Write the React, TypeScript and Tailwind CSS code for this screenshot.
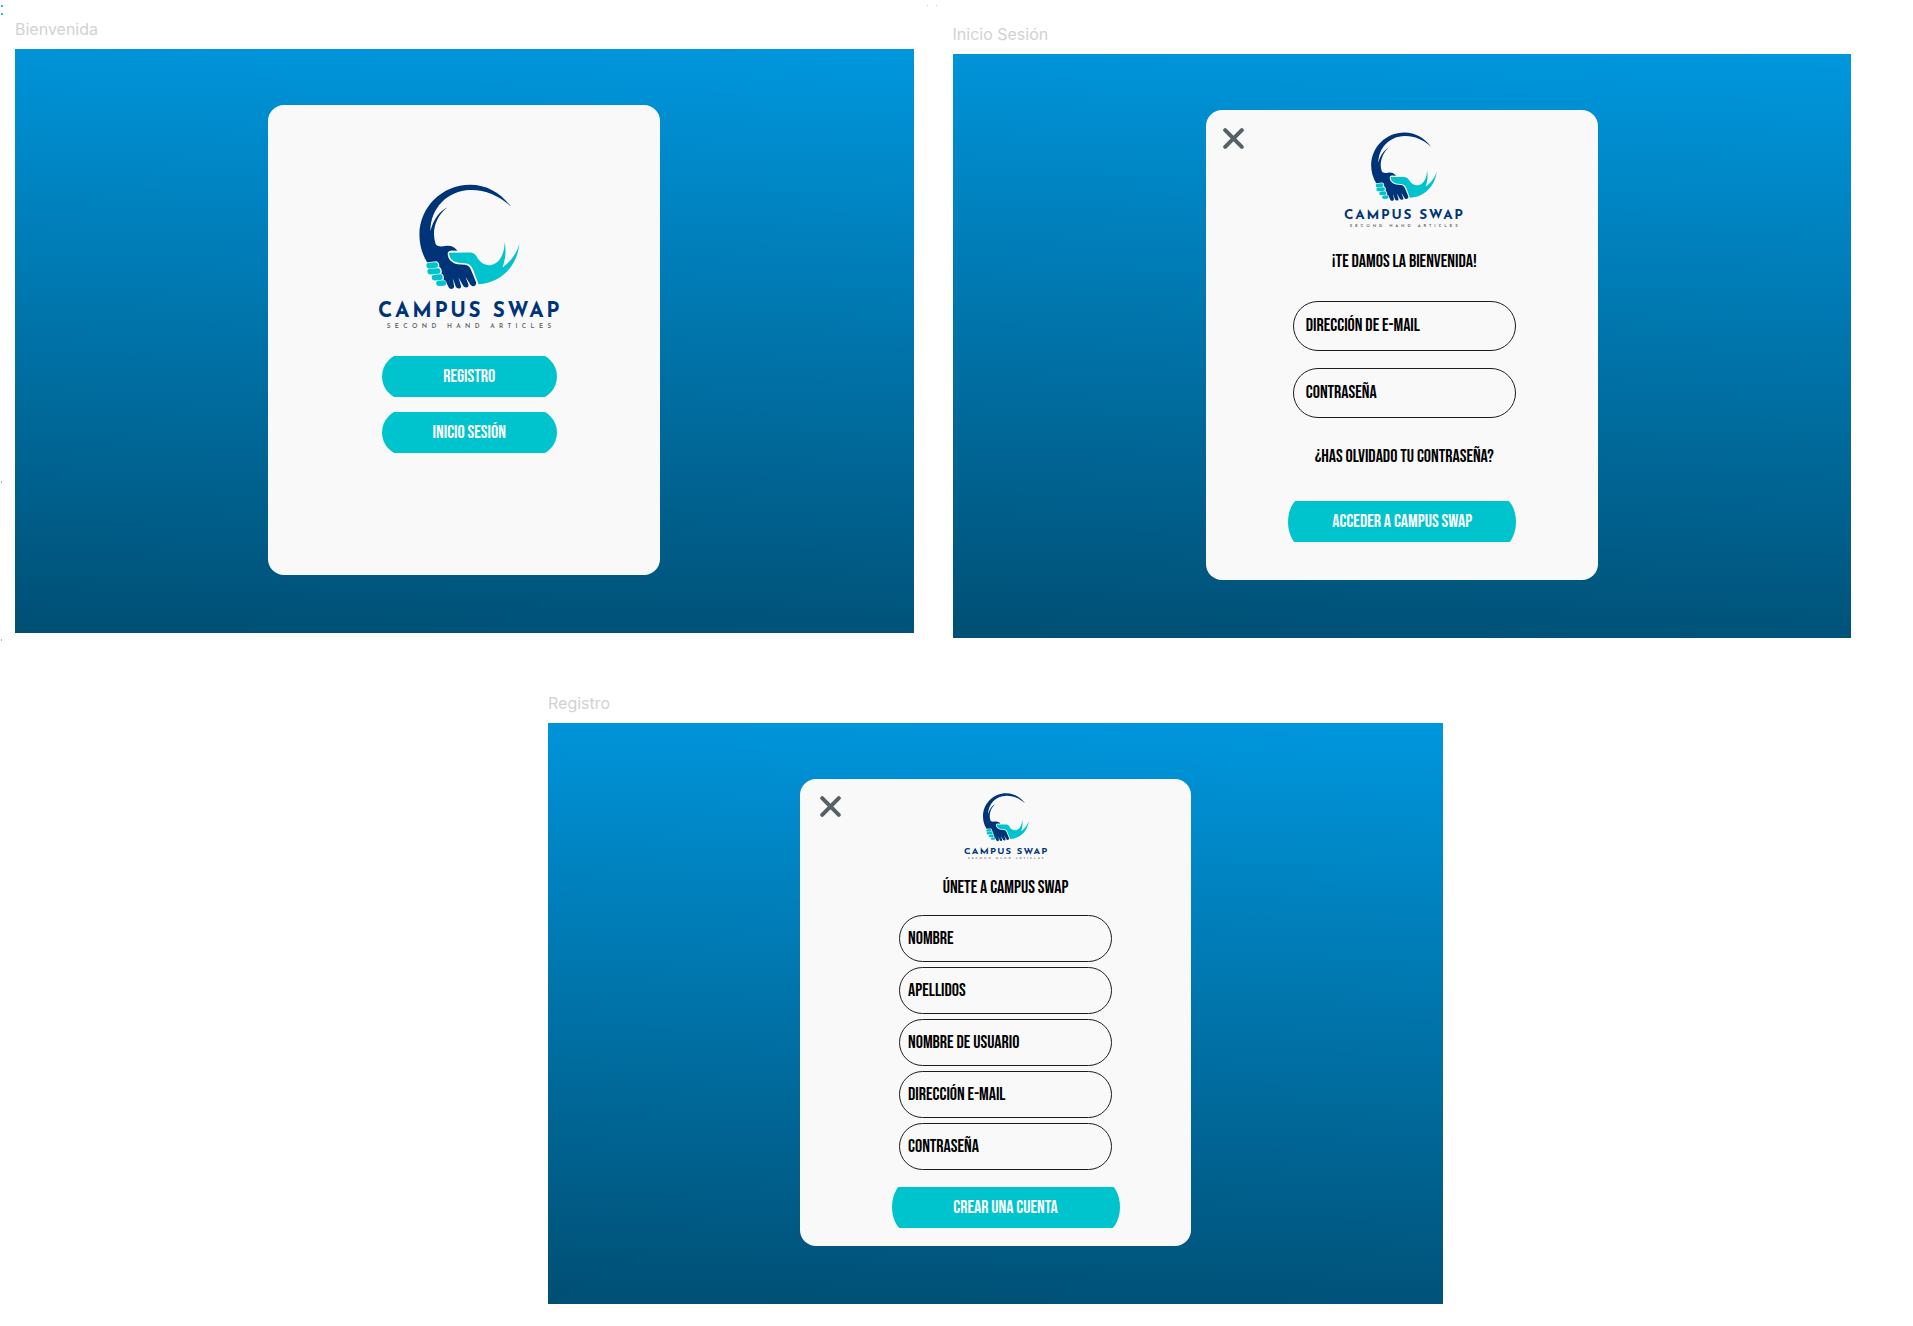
import type { ReactNode } from "react";

function Logo({ className }: { className: string }) {
  return (
    <svg viewBox="24 40 548 436" role="img" aria-label="Campus Swap, second hand articles" className={className}>
      <path
        fill="#003478"
        d="M422 107C390 66 350 42 300 42C215 42 148 110 148 192C148 222 156 250 171 274L198 271C206 273 209 280 207 288C214 292 217 300 214 308C221 312 223 320 220 326C226 328 229 332 230 338L236 350C241 357 251 355 252 347L248 322L257 348C262 356 273 354 273 346L265 320L279 345C285 353 296 350 295 342L286 318L301 342C307 350 319 345 318 335L302 296C298 287 292 283 284 282L262 280C244 277 231 263 233 246C235 241 240 239 246 239L262 240C254 229 240 223 225 226C210 228 200 227 196 218C189 195 190 172 201 148C208 133 218 121 231 110C211 120 190 143 181 181C181 112 232 60 300 58C346 57 384 74 422 107Z"
      />
      <path
        fill="#00c4cd"
        d="M237 246L298 245C308 245 315 249 320 258C329 275 343 284 360 283C386 281 404 250 403 213C409 240 405 266 397 290C423 270 441 246 447 219C442 286 390 338 325 340L309 297C304 284 297 278 284 277L266 276C247 273 236 261 237 246Z"
      />
      <g fill="#00c4cd">
        <rect x="169" y="275" width="35" height="17" rx="8" transform="rotate(-5 186 284)" />
        <rect x="172" y="293" width="39" height="17" rx="8" transform="rotate(-5 191 302)" />
        <rect x="185" y="311" width="33" height="17" rx="8" transform="rotate(-5 201 320)" />
        <rect x="198" y="329" width="30" height="16" rx="8" transform="rotate(-5 213 336)" />
      </g>
      <text x="24" y="437" fill="#003478" className="font-['Josefin_Sans',sans-serif] text-[62px] font-bold tracking-[8px]">
        CAMPUS SWAP
      </text>
      <text x="50" y="472" fill="#5b5b5b" className="font-['Josefin_Sans',sans-serif] text-[19px] font-semibold tracking-[13px]">
        SECOND HAND ARTICLES
      </text>
    </svg>
  );
}

function Frame({ id, title, children }: { id: string; title: string; children: ReactNode }) {
  return (
    <section aria-labelledby={id}>
      <h2 id={id} className="mb-2.5 font-[Inter,sans-serif] text-base leading-5 text-[#d2d2d2]">
        {title}
      </h2>
      <div className="flex justify-center bg-linear-[182deg,#0097de_0%,#004f74_100%] pt-14 pb-[58px]">{children}</div>
    </section>
  );
}

function CloseButton() {
  return (
    <button type="button" aria-label="Cerrar" className="self-start justify-self-start">
      <svg viewBox="0 0 21 21" className="size-[21px]" fill="none" stroke="#566067" strokeWidth="4" strokeLinecap="round">
        <path d="M2.2 2.2L18.8 18.8M18.8 2.2L2.2 18.8" />
      </svg>
    </button>
  );
}

function PillButton({ className, children }: { className: string; children: ReactNode }) {
  return (
    <button type="button" className={`flex h-[41px] items-center overflow-hidden ${className}`}>
      <span className="flex w-full shrink-0 items-center justify-center bg-[#00c4cd] pt-px text-lg text-white">
        {children}
      </span>
    </button>
  );
}

function Field({ label, type = "text", className }: { label: string; type?: string; className: string }) {
  return (
    <input
      type={type}
      aria-label={label}
      placeholder={label}
      className={`rounded-full border border-[#1c1c1c] bg-transparent text-lg leading-5 text-black placeholder:text-black placeholder:opacity-100 ${className}`}
    />
  );
}

export default function App() {
  return (
    <main className="relative bg-white pt-[19px] pb-6 font-['Bebas_Neue',sans-serif] text-lg leading-5 text-black">
      <span className="absolute top-[5px] left-px size-0.5 bg-[#3bb5f0]" />
      <span className="absolute top-[13px] left-px size-0.5 bg-[#3bb5f0]" />
      <span className="absolute top-[5px] left-[927px] size-px bg-[#9ad8f5]" />
      <span className="absolute top-[5px] left-[936px] size-px bg-[#9ad8f5]" />
      <span className="absolute top-[481px] left-px h-0.5 w-px bg-[#7cc8e6]" />
      <span className="absolute top-[639px] left-px h-0.5 w-px bg-[#7cc8e6]" />

      <div className="grid grid-cols-2 gap-[39px] pr-[62px] pl-[15px]">
        <Frame id="bienvenida" title="Bienvenida">
          <div className="flex min-h-[470px] w-[392px] flex-col items-center rounded-2xl bg-[#f9f9f9] pt-[79px] pl-2.5">
            <Logo className="w-[183px]" />
            <PillButton className="mt-[26px] w-[175px] [&>span]:h-[47px] [&>span]:rounded-full">Registro</PillButton>
            <PillButton className="mt-[15px] w-[175px] [&>span]:h-[47px] [&>span]:rounded-full">Inicio sesión</PillButton>
          </div>
        </Frame>

        <div className="pt-[5px]">
          <Frame id="inicio" title="Inicio Sesión">
            <div className="flex min-h-[470px] w-[392px] flex-col items-center rounded-2xl bg-[#f9f9f9] pt-[18px] pr-3 pl-[17px]">
              <div className="grid w-full grid-cols-[1fr_auto_1fr]">
                <CloseButton />
                <Logo className="mt-1 w-[120px]" />
              </div>
              <p className="mt-[25px]">¡Te damos la bienvenida!</p>
              <form className="mt-[29px] flex flex-col items-center">
                <Field label="Dirección de e-mail" type="email" className="h-[50px] w-[223px] px-3 pb-0.5" />
                <Field label="Contraseña" type="password" className="mt-[17px] h-[50px] w-[223px] px-3 pb-0.5" />
                <a href="#recuperar" className="mt-[29px]">¿Has olvidado tu contraseña?</a>
                <PillButton className="mt-[34px] mr-1 w-[228px] [&>span]:h-[50px] [&>span]:rounded-[16px/25px]">
                  Acceder a Campus Swap
                </PillButton>
              </form>
            </div>
          </Frame>
        </div>
      </div>

      <div className="mt-[55px] flex justify-center pl-[78px]">
        <div className="w-full max-w-[895px]">
          <Frame id="registro" title="Registro">
            <div className="flex min-h-[467px] w-[391px] flex-col items-center rounded-2xl bg-[#f9f9f9] pt-3.5 pl-5">
              <div className="grid w-full grid-cols-[1fr_auto_1fr]">
                <div className="pt-[3px]">
                  <CloseButton />
                </div>
                <Logo className="w-[84px]" />
              </div>
              <p className="mt-[18px]">Únete a Campus Swap</p>
              <form className="mt-[17px] flex flex-col items-center gap-[5px]">
                <Field label="Nombre" className="h-[47px] w-[213px] px-2" />
                <Field label="Apellidos" className="h-[47px] w-[213px] px-2" />
                <Field label="Nombre de usuario" className="h-[47px] w-[213px] px-2" />
                <Field label="Dirección e-mail" type="email" className="h-[47px] w-[213px] px-2" />
                <Field label="Contraseña" type="password" className="h-[47px] w-[213px] px-2" />
                <PillButton className="mt-3 w-[228px] [&>span]:h-[50px] [&>span]:rounded-[16px/25px]">
                  Crear una cuenta
                </PillButton>
              </form>
            </div>
          </Frame>
        </div>
      </div>
    </main>
  );
}
